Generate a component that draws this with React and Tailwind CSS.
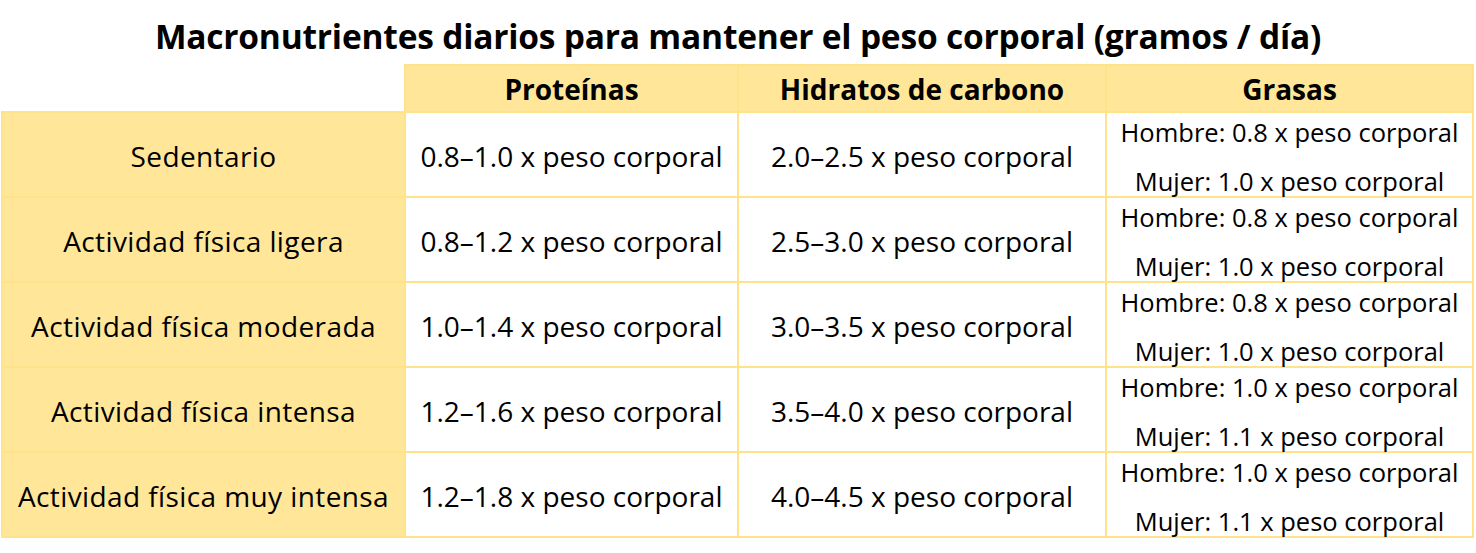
const rows = [
  { label: "Sedentario", prot: "0.8–1.0 x peso corporal", hc: "2.0–2.5 x peso corporal", h: "0.8", m: "1.0" },
  { label: "Actividad física ligera", prot: "0.8–1.2 x peso corporal", hc: "2.5–3.0 x peso corporal", h: "0.8", m: "1.0" },
  { label: "Actividad física moderada", prot: "1.0–1.4 x peso corporal", hc: "3.0–3.5 x peso corporal", h: "0.8", m: "1.0" },
  { label: "Actividad física intensa", prot: "1.2–1.6 x peso corporal", hc: "3.5–4.0 x peso corporal", h: "1.0", m: "1.1" },
  { label: "Actividad física muy intensa", prot: "1.2–1.8 x peso corporal", hc: "4.0–4.5 x peso corporal", h: "1.0", m: "1.1" },
];

export default function App() {
  return (
    <div className="w-[1476px] h-[553px] bg-white text-black" style={{ fontFamily: "'Open Sans', sans-serif" }}>
      <h1 className="h-[64px] flex items-center justify-center text-[33.5px] font-bold tracking-[-0.2px] pt-[8px]">
        Macronutrientes diarios para mantener el peso corporal (gramos / día)
      </h1>
      <table className="ml-[1px] border-collapse table-fixed text-[28px]">
        <colgroup>
          <col className="w-[403px]" />
          <col className="w-[333px]" />
          <col className="w-[368px]" />
          <col className="w-[367px]" />
        </colgroup>
        <thead>
          <tr className="h-[47px]">
            <th className="p-0" />
            <th className="p-0 bg-[#ffe699] border-2 border-[#ffe38a] font-bold">Proteínas</th>
            <th className="p-0 bg-[#ffe699] border-2 border-[#ffe38a] font-bold">Hidratos de carbono</th>
            <th className="p-0 bg-[#ffe699] border-2 border-[#ffe38a] font-bold">Grasas</th>
          </tr>
        </thead>
        <tbody>
          {rows.map((r) => (
            <tr key={r.label} className="h-[85px]">
              <td className="p-0 pt-[2px] bg-[#ffe699] border-2 border-[#ffe38a] text-center tracking-[0.4px]">{r.label}</td>
              <td className="p-0 pt-[2px] border-2 border-[#ffe38a] text-center">{r.prot}</td>
              <td className="p-0 pt-[2px] border-2 border-[#ffe38a] text-center">{r.hc}</td>
              <td className="p-0 border-2 border-[#ffe38a] text-center align-top text-[25.5px]">
                <div className="leading-[28px] pt-[5px]">Hombre: {r.h} x peso corporal</div>
                <div className="leading-[28px] pt-[21px]">Mujer: {r.m} x peso corporal</div>
              </td>
            </tr>
          ))}
        </tbody>
      </table>
    </div>
  );
}
